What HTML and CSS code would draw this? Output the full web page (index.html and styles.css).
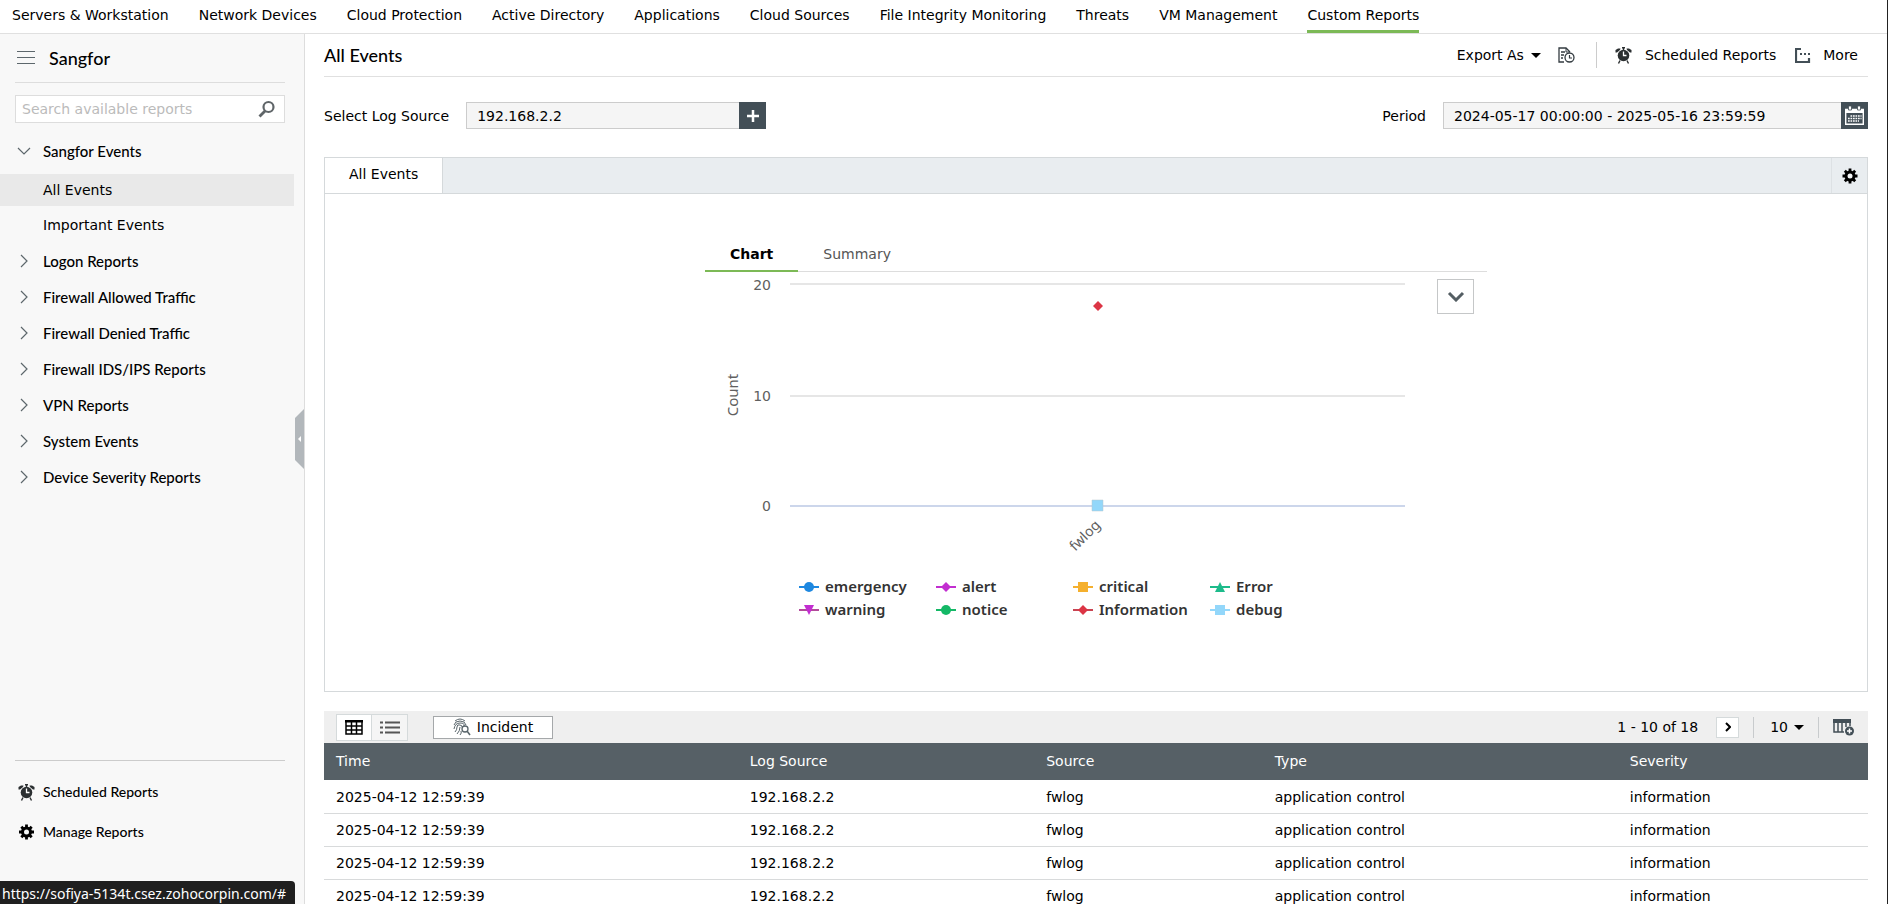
FILE: index.html
```html
<!DOCTYPE html>
<html lang="en">
  <head>
    <meta charset="UTF-8" />
    <meta name="viewport" content="width=device-width, initial-scale=1.0" />
    <title>Custom Reports - Sangfor</title>
    <link rel="stylesheet" href="styles.css">
  </head>

  <body>
    <!-- shared icons -->
    <svg class="sprite" aria-hidden="true">
      <symbol id="icon-alarm" viewBox="0 0 17 18">
        <circle cx="8.500" cy="9.500" r="5.800" fill="#2b2f31" />
        <path d="M7 1.800h3M8.500 1v3M5 14.500l-1.500 3M12 14.500l1.500 3" fill="none" stroke="#2b2f31" stroke-width="1.400" />
        <path d="M.5 6.500V4L3 2.500h2.500L5 4 2 6.500zM16.500 6.500V4L14 2.500h-2.500L12 4l3 2.500z" fill="#2b2f31" />
        <path d="M8.500 5.500v4h3" fill="none" stroke="#fff" stroke-width="1.300" />
      </symbol>
      <symbol id="icon-gear" viewBox="0 0 16 16">
        <path d="M8 .5v15M.5 8h15M2.800 2.800l10.400 10.400M13.200 2.800L2.800 13.200" stroke="#000" stroke-width="2.800" />
        <circle cx="8" cy="8" r="4" fill="none" stroke="#000" stroke-width="3" />
        <circle cx="8" cy="8" r="2.500" fill="#f4f6f7" />
      </symbol>
      <symbol id="icon-right" viewBox="0 0 8 14">
        <path d="M1 1l6 6-6 6" fill="none" stroke="#5d676c" stroke-width="1.200" />
      </symbol>
    </svg>

    <nav class="topnav">
      <a href="#">Servers &amp; Workstation</a>
      <a href="#">Network Devices</a>
      <a href="#">Cloud Protection</a>
      <a href="#">Active Directory</a>
      <a href="#">Applications</a>
      <a href="#">Cloud Sources</a>
      <a href="#">File Integrity Monitoring</a>
      <a href="#">Threats</a>
      <a href="#">VM Management</a>
      <a href="#" class="active">Custom Reports</a>
    </nav>

    <div class="layout">
      <aside class="sidebar">
        <div class="sidebar-head">
          <button type="button" class="menu-btn" aria-label="Menu">
            <svg width="18" height="14" viewBox="0 0 18 14"><path d="M0 .5h18M0 6.500h18M0 12.500h18" stroke="#5d676c" /></svg>
          </button>
          <h2>Sangfor</h2>
        </div>
        <div class="search">
          <input type="text" placeholder="Search available reports" aria-label="Search available reports" />
          <button type="button" aria-label="Search">
            <svg width="18" height="18" viewBox="0 0 18 18"><circle cx="10.500" cy="7" r="5" fill="none" stroke="#5f6568" stroke-width="2.200" /><path d="M7 11l-5.500 5.500" stroke="#5f6568" stroke-width="2.800" /></svg>
          </button>
        </div>

        <ul class="tree">
          <li class="group open"><a href="#"><svg width="14" height="8" viewBox="0 0 14 8"><path d="M1 1l6 6 6-6" fill="none" stroke="#5d676c" stroke-width="1.200" /></svg>Sangfor Events</a></li>
          <li class="child active"><a href="#">All Events</a></li>
          <li class="child"><a href="#">Important Events</a></li>
          <li class="group"><a href="#"><svg width="8" height="14"><use href="#icon-right" /></svg>Logon Reports</a></li>
          <li class="group"><a href="#"><svg width="8" height="14"><use href="#icon-right" /></svg>Firewall Allowed Traffic</a></li>
          <li class="group"><a href="#"><svg width="8" height="14"><use href="#icon-right" /></svg>Firewall Denied Traffic</a></li>
          <li class="group"><a href="#"><svg width="8" height="14"><use href="#icon-right" /></svg>Firewall IDS/IPS Reports</a></li>
          <li class="group"><a href="#"><svg width="8" height="14"><use href="#icon-right" /></svg>VPN Reports</a></li>
          <li class="group"><a href="#"><svg width="8" height="14"><use href="#icon-right" /></svg>System Events</a></li>
          <li class="group"><a href="#"><svg width="8" height="14"><use href="#icon-right" /></svg>Device Severity Reports</a></li>
        </ul>

        <div class="sidebar-foot">
          <a href="#"><svg width="17" height="18"><use href="#icon-alarm" /></svg>Scheduled Reports</a>
          <a href="#"><svg width="17" height="16"><use href="#icon-gear" /></svg>Manage Reports</a>
        </div>

        <button type="button" class="collapse" aria-label="Collapse sidebar">
          <svg width="3" height="6" viewBox="0 0 3 6"><path d="M3 0v6L0 3z" fill="#fff" /></svg>
        </button>
      </aside>

      <main class="content">
        <header class="page-head">
          <h1>All Events</h1>
          <div class="actions">
            <button type="button" class="export">Export As
              <svg width="10" height="5" viewBox="0 0 10 5"><path d="M0 0h10L5 5z" /></svg>
            </button>
            <button type="button" class="history" aria-label="Export history">
              <svg width="17" height="16" viewBox="0 0 17 16" fill="none" stroke="#333b40">
                <path d="M6 15H1V1h7l4 4M3 5h4M3 8h3M3 11h2" stroke-width="1.300" /><path d="M8 1v4h4" />
                <circle cx="11.500" cy="10.500" r="4.500" stroke-width="1.300" /><path d="M11.500 8v3h2.500" stroke-width="1.200" />
              </svg>
            </button>
            <a href="#" class="scheduled"><svg width="17" height="18"><use href="#icon-alarm" /></svg>Scheduled Reports</a>
            <button type="button" class="more">
              <svg width="16" height="15" viewBox="0 0 16 15"><path d="M6 1H1v13h13v-4" fill="none" stroke="#434f57" stroke-width="2.200" /><path d="M5 5h2v2H5zM9 5h2v2H9zM13 5h2v2h-2z" fill="#434f57" /></svg>
              More
            </button>
          </div>
        </header>

        <div class="filters">
          <label for="logSource">Select Log Source</label>
          <div class="field source-field">
            <input type="text" id="logSource" value="192.168.2.2" />
            <button type="button" aria-label="Add log source">
              <svg width="12" height="12" viewBox="0 0 12 12"><path d="M6 0v12M0 6h12" stroke="#fff" stroke-width="2.500" /></svg>
            </button>
          </div>
          <label for="period" class="period-label">Period</label>
          <div class="field period-field">
            <input type="text" id="period" value="2024-05-17 00:00:00 - 2025-05-16 23:59:59" />
            <button type="button" aria-label="Pick period">
              <svg width="19" height="19" viewBox="0 0 19 19"><path d="M.7 3.500h17.600v14.800H.7z" fill="none" stroke="#fff" stroke-width="1.400" /><path d="M1 3h17v4H1z" fill="#fff" /><path d="M3.500 0h3v4h-3zM12.500 0h3v4h-3z" fill="#fff" stroke="#434f57" stroke-width=".8" /><path d="M5.500 10h11M3 12.500h13.500M3 15h11" stroke="#fff" stroke-width="1.500" stroke-dasharray="1.700 .8" /></svg>
            </button>
          </div>
        </div>

        <section class="panel">
          <div class="panel-tabs">
            <button type="button" class="tab">All Events</button>
            <button type="button" class="gear" aria-label="Settings"><svg width="16" height="16"><use href="#icon-gear" /></svg></button>
          </div>
          <div class="chart-box">
            <div class="chart-tabs">
              <button type="button" class="active">Chart</button>
              <button type="button">Summary</button>
            </div>
            <div class="chart-body">
              <svg class="chart" viewBox="0 0 720 365">
                <g class="grid">
                  <path d="M85 12h615M85 124h615" />
                  <path class="axis" d="M85 234h615" />
                </g>
                <g class="ticks">
                  <text x="66" y="18">20</text>
                  <text x="66" y="129">10</text>
                  <text x="66" y="239">0</text>
                </g>
                <text class="axis-title" transform="translate(33 123) rotate(-90)">Count</text>
                <text class="category" transform="translate(396 254) rotate(-45)">fwlog</text>
                <path d="M393 29l5 5-5 5-5-5z" fill="#dc3545" />
                <path d="M387 228h11v11h-11z" fill="#93d7fa" stroke="#b5c4ce" stroke-width=".5" />
                <g class="legend">
                  <path d="M94 315h20" stroke="#1e88e0" /><circle cx="104" cy="315" r="5" fill="#1e88e0" />
                  <text x="120" y="320">emergency</text>
                  <path d="M231 315h20" stroke="#c22ed0" /><path d="M241 310l5 5-5 5-5-5z" fill="#c22ed0" />
                  <text x="257" y="320">alert</text>
                  <path d="M368 315h20" stroke="#f5b02e" /><path d="M373 310h10v10h-10z" fill="#f5b02e" />
                  <text x="394" y="320">critical</text>
                  <path d="M505 315h20" stroke="#1dbb8b" /><path d="M515 310l5 10h-10z" fill="#1dbb8b" />
                  <text x="531" y="320">Error</text>
                  <path d="M94 338h20" stroke="#b34a9b" /><path d="M99 333h10l-5 10z" fill="#c22ed0" />
                  <text x="120" y="343">warning</text>
                  <path d="M231 338h20" stroke="#14b866" /><circle cx="241" cy="338" r="5" fill="#14b866" />
                  <text x="257" y="343">notice</text>
                  <path d="M368 338h20" stroke="#c94452" /><path d="M378 333l5 5-5 5-5-5z" fill="#dc3545" />
                  <text x="394" y="343">Information</text>
                  <path d="M505 338h20" stroke="#93d7fa" /><path d="M510 333h10v10h-10z" fill="#93d7fa" />
                  <text x="531" y="343">debug</text>
                </g>
              </svg>
              <button type="button" class="chart-menu" aria-label="Chart type">
                <svg width="18" height="11" viewBox="0 0 18 11"><path d="M2 2l7 7 7-7" fill="none" stroke="#545e63" stroke-width="3" /></svg>
              </button>
            </div>
          </div>
        </section>

        <section class="results">
          <div class="toolbar">
            <div class="view-toggle">
              <button type="button" class="active" aria-label="Table view">
                <svg width="18" height="15" viewBox="0 0 18 15"><path d="M1 1h16v13H1zM1 6h16M1 10h16M6.500 1v13M11.500 1v13" fill="none" stroke="#000" stroke-width="1.500" /><path d="M0 0h18v2.500H0z" /></svg>
              </button>
              <button type="button" aria-label="List view">
                <svg width="20" height="13" viewBox="0 0 20 13"><path d="M0 1.500h3M5 1.500h15M0 6.500h3M5 6.500h15M0 11.500h3M5 11.500h15" stroke="#555" stroke-width="2" /></svg>
              </button>
            </div>
            <button type="button" class="incident">
              <svg width="18" height="18" viewBox="0 0 18 18" fill="none" stroke="#59656b">
                <path d="M2 3Q7-1 12 3M1 7Q2 3 7 3t6 4M1 11Q2 5 7 5t4 3M2 14Q4 12 4 9t3-2 2 2M4 16Q7 13 7 9M7 17Q9 15 8 13" />
                <circle cx="12" cy="11" r="3" stroke-width="1.300" /><path d="M14 13l3 4" stroke-width="1.600" />
              </svg>
              Incident
            </button>
            <div class="pager">
              <span class="range">1 - 10 of 18</span>
              <button type="button" class="next" aria-label="Next page"><svg width="6" height="10" viewBox="0 0 6 10"><path d="M1 1l4 4-4 4" fill="none" stroke="#000" stroke-width="2" /></svg></button>
              <button type="button" class="page-size">10 <svg width="10" height="5" viewBox="0 0 10 5"><path d="M0 0h10L5 5z" /></svg></button>
              <button type="button" class="columns" aria-label="Add columns">
                <svg width="22" height="17" viewBox="0 0 22 17"><path d="M1 1h16v6M1 1v12h10M5 3v10M9 3v10M13 3v5" fill="none" stroke="#434f57" stroke-width="1.500" /><path d="M0 0h18v4H0z" fill="#434f57" /><circle cx="16.500" cy="12" r="4.500" fill="#434f57" /><path d="M16.500 9.500v5M14 12h5" stroke="#fff" stroke-width="1.500" /></svg>
              </button>
            </div>
          </div>
          <table>
            <thead>
              <tr><th>Time</th><th>Log Source</th><th>Source</th><th>Type</th><th>Severity</th></tr>
            </thead>
            <tbody>
              <tr><td>2025-04-12 12:59:39</td><td>192.168.2.2</td><td>fwlog</td><td>application control</td><td>information</td></tr>
              <tr><td>2025-04-12 12:59:39</td><td>192.168.2.2</td><td>fwlog</td><td>application control</td><td>information</td></tr>
              <tr><td>2025-04-12 12:59:39</td><td>192.168.2.2</td><td>fwlog</td><td>application control</td><td>information</td></tr>
              <tr><td>2025-04-12 12:59:39</td><td>192.168.2.2</td><td>fwlog</td><td>application control</td><td>information</td></tr>
            </tbody>
          </table>
        </section>
      </main>
    </div>

    <div class="status-link">https://sofiya-5134t.csez.zohocorpin.com/#</div>
  </body>
</html>
```
FILE: styles.css
```css
:root {
  --text: #000;
  --line: #ddd;
  --slate: #434f57;
  --green: #7cb956;
}

* {
  margin: 0;
  padding: 0;
  box-sizing: border-box;
}

body {
  height: 100vh;
  display: flex;
  flex-direction: column;
  overflow: hidden;
  font-family: Verdana, "DejaVu Sans", sans-serif;
  font-size: 14px;
  line-height: 18px;
  color: var(--text);
  background: #fff;
  border-right: 1px solid #222;
}

a {
  color: inherit;
  text-decoration: none;
}

button {
  font: inherit;
  color: inherit;
  background: none;
  border: none;
  cursor: pointer;
}

svg {
  display: block;
  flex-shrink: 0;
}

.sprite {
  position: absolute;
  width: 0;
  height: 0;
}

/* top navigation */
.topnav {
  display: flex;
  gap: 30px;
  height: 34px;
  flex-shrink: 0;
  padding: 0 12px;
  border-bottom: 1px solid #e0e0e0;
  white-space: nowrap;
}

.topnav a {
  padding-top: 6px;
  border-bottom: 3px solid transparent;
}

.topnav a.active {
  border-bottom-color: var(--green);
}

.layout {
  flex: 1;
  min-height: 0;
  display: flex;
}

/* sidebar */
.sidebar {
  position: relative;
  display: flex;
  flex-direction: column;
  width: 305px;
  flex-shrink: 0;
  background: #f8f8f8;
  border-right: 1px solid var(--line);
  font-family: Lato, sans-serif;
  font-size: 15px;
  font-weight: 500;
}

.sidebar-head {
  display: flex;
  align-items: center;
  gap: 14px;
  height: 49px;
  margin: 0 19px 12px 15px;
  padding-left: 2px;
  border-bottom: 1px solid var(--line);
}

.sidebar-head h2 {
  font-size: 18px;
  font-weight: 500;
}

.search {
  display: flex;
  align-items: center;
  height: 28px;
  margin: 0 19px 10px 15px;
  padding: 0 8px 0 6px;
  background: #fff;
  border: 1px solid var(--line);
}

.search input {
  flex: 1;
  min-width: 0;
  border: none;
  outline: none;
  font: 14px Verdana, "DejaVu Sans", sans-serif;
}

.search input::placeholder {
  color: #bbb;
}

.tree {
  list-style: none;
}

.tree a {
  display: flex;
  align-items: center;
  height: 36px;
  padding-left: 43px;
}

.group a {
  gap: 15px;
  padding-left: 20px;
}

.group.open a {
  gap: 12px;
  padding-left: 17px;
}

.child {
  margin-right: 10px;
  font-family: Verdana, "DejaVu Sans", sans-serif;
  font-size: 14px;
  font-weight: 400;
}

.child.active {
  margin: 5px 10px 1px 0;
  background: #e9e9e9;
}

.child.active a {
  height: 32px;
}

.sidebar-foot {
  margin: auto 19px 52px 15px;
  padding-top: 11px;
  border-top: 1px solid #ccc;
}

.sidebar-foot a {
  display: flex;
  align-items: center;
  gap: 8px;
  height: 40px;
  padding-left: 3px;
  font-size: 14px;
}

.collapse {
  position: absolute;
  right: 0;
  top: 375px;
  width: 9px;
  height: 60px;
  padding-left: 3px;
  background: #b2b7bb;
  clip-path: polygon(0 9px, 100% 0, 100% 100%, 0 51px);
}

/* main content */
.content {
  flex: 1;
  min-width: 0;
  padding: 0 19px;
}

.page-head {
  display: flex;
  align-items: center;
  justify-content: space-between;
  height: 43px;
  border-bottom: 1px solid #e0e0e0;
}

.page-head h1 {
  font-family: Lato, sans-serif;
  font-size: 18px;
  font-weight: 500;
}

.actions,
.actions > * {
  display: flex;
  align-items: center;
}

.export {
  gap: 7px;
}

.history {
  height: 26px;
  padding: 0 21px 0 17px;
  border-right: 1px solid #ccc;
}

.scheduled {
  gap: 13px;
  margin-left: 18px;
}

.more {
  gap: 12px;
  margin: 0 10px 0 19px;
}

.filters {
  display: flex;
  align-items: center;
  margin: 25px 0 28px;
}

.field {
  display: flex;
  height: 27px;
}

.field input {
  flex: 1;
  min-width: 0;
  padding-left: 10px;
  font: inherit;
  color: inherit;
  background: #f5f5f5;
  border: 1px solid #ccc;
  border-right: none;
}

.field button {
  display: flex;
  align-items: center;
  justify-content: center;
  width: 27px;
  background: var(--slate);
}

.source-field {
  width: 300px;
  margin-left: 17px;
}

.period-label {
  margin-left: auto;
}

.period-field {
  width: 425px;
  margin-left: 17px;
}

/* chart panel */
.panel {
  height: 535px;
  border: 1px solid #d5d9db;
}

.panel-tabs {
  display: flex;
  justify-content: space-between;
  height: 36px;
  background: #e9edf0;
  border-bottom: 1px solid #d5d9db;
}

.tab {
  padding: 0 24px 3px;
  background: #fff;
  border-right: 1px solid #d5d9db;
}

.gear {
  width: 36px;
  padding-left: 10px;
  border-left: 1px solid #dde1e4;
}

.chart-box {
  width: 782px;
  margin: 42px auto 0;
}

.chart-tabs {
  display: flex;
  height: 36px;
  border-bottom: 1px solid var(--line);
}

.chart-tabs button {
  height: 36px;
  padding: 1px 25px 0;
  color: #555;
  border-bottom: 2px solid transparent;
}

.chart-tabs .active {
  color: #000;
  font-weight: 700;
  border-bottom-color: var(--green);
}

.chart-body {
  display: flex;
  align-items: flex-start;
}

.chart {
  width: 720px;
  height: 365px;
}

.chart text {
  font-family: "Noto Sans", sans-serif;
  font-size: 15px;
  fill: #606060;
}

.grid path {
  fill: none;
  stroke: #e6e6e6;
  stroke-width: 2;
}

.grid .axis {
  stroke: #ccd6eb;
}

.chart .ticks text {
  font-family: Verdana, "DejaVu Sans", sans-serif;
  font-size: 14px;
  text-anchor: end;
}

.chart .axis-title {
  text-anchor: middle;
}

.chart .category {
  text-anchor: end;
  font-size: 14px;
}

.legend path,
.legend circle {
  stroke-width: 2;
}

.chart .legend text {
  font-weight: 600;
  fill: #333;
}

.chart-menu {
  display: flex;
  align-items: center;
  justify-content: center;
  width: 37px;
  height: 35px;
  margin: 7px 0 0 12px;
  border: 1px solid #c5c7c8;
}

/* results */
.toolbar {
  display: flex;
  align-items: center;
  height: 32px;
  margin-top: 19px;
  padding: 0 13px 0 12px;
  background: #efefef;
}

.view-toggle {
  display: flex;
  height: 27px;
  border: 1px solid #d5dadb;
}

.view-toggle button {
  display: flex;
  align-items: center;
  justify-content: center;
  width: 35px;
  background: #f5f5f5;
}

.view-toggle .active {
  background: #fff;
  border-right: 1px solid #d5dadb;
}

.incident {
  display: flex;
  align-items: center;
  justify-content: center;
  gap: 6px;
  width: 120px;
  height: 23px;
  margin-left: 25px;
  background: #fff;
  border: 1px solid #a5a8aa;
}

.pager {
  display: flex;
  align-items: center;
  margin-left: auto;
}

.next {
  display: flex;
  align-items: center;
  justify-content: center;
  width: 23px;
  height: 21px;
  margin: 0 14px 0 18px;
  background: #fff;
  border: 1px solid #d5dadb;
}

.page-size {
  display: flex;
  align-items: center;
  gap: 6px;
  height: 21px;
  padding: 0 14px 0 16px;
  border: 1px solid #c8cbcd;
  border-width: 0 1px;
}

.columns {
  margin-left: 14px;
}

table {
  width: 100%;
  border-collapse: collapse;
  table-layout: fixed;
}

th {
  height: 37px;
  padding: 0 12px 1px;
  background: #566066;
  color: #fff;
  font-weight: 400;
  text-align: left;
}

th:nth-child(1) {
  width: 26.8%;
}

th:nth-child(2) {
  width: 19.2%;
}

th:nth-child(3) {
  width: 14.8%;
}

th:nth-child(4) {
  width: 23%;
}

td {
  height: 33px;
  padding: 1px 12px 0;
  border-bottom: 1px solid #d8dadb;
}

/* link preview in the window corner */
.status-link {
  position: fixed;
  left: 0;
  bottom: 0;
  height: 23px;
  padding: 4px 9px 0 2px;
  background: #1f1f1f;
  color: #fff;
  border-top-right-radius: 4px;
  font-family: "Noto Sans", sans-serif;
}
```
